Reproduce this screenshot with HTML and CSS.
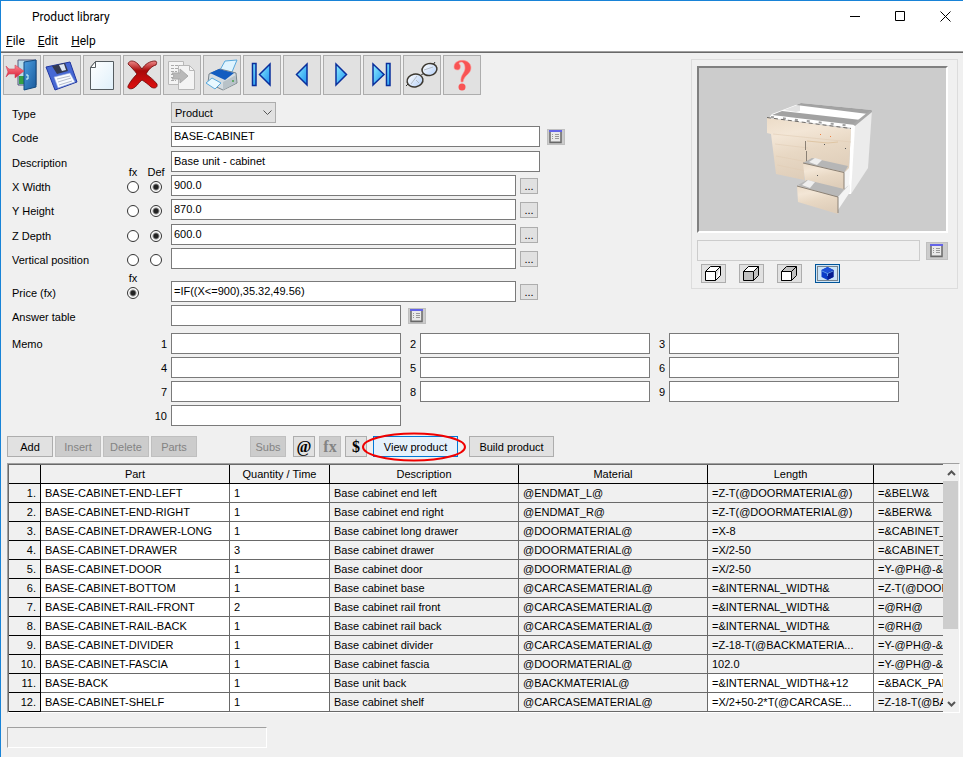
FILE: index.html
```html
<!DOCTYPE html>
<html lang="en">
<head>
  <meta charset="UTF-8">
  <meta name="viewport" content="width=device-width, initial-scale=1.0">
  <title>Product library</title>
  <link rel="stylesheet" href="styles.css">
</head>
<body>
  <!-- Symbols shared by several buttons -->
  <svg class="symbols" width="0" height="0" aria-hidden="true">
    <defs>
      <linearGradient id="blueArrow" x1="0" y1="0" x2="1" y2="1">
        <stop offset="0" stop-color="#8ff0ff"/>
        <stop offset="1" stop-color="#1a90f0"/>
      </linearGradient>
      <linearGradient id="doorBlue" x1="0" y1="0" x2="1" y2="1">
        <stop offset="0" stop-color="#4a9de0"/>
        <stop offset="1" stop-color="#1a5a9c"/>
      </linearGradient>
      <linearGradient id="pinkRed" x1="0" y1="0" x2="0" y2="1">
        <stop offset="0" stop-color="#ff8a94"/>
        <stop offset="1" stop-color="#d81830"/>
      </linearGradient>
      <linearGradient id="deepRed" x1="0" y1="0" x2="0" y2="1">
        <stop offset="0" stop-color="#ee8a8a"/>
        <stop offset="0.35" stop-color="#a80808"/>
        <stop offset="1" stop-color="#e01010"/>
      </linearGradient>
      <linearGradient id="paper" x1="0" y1="0" x2="1" y2="1">
        <stop offset="0" stop-color="#ffffff"/>
        <stop offset="1" stop-color="#dff0fa"/>
      </linearGradient>
      <linearGradient id="wood" x1="0" y1="0" x2="0.3" y2="1">
        <stop offset="0" stop-color="#ecdcc8"/>
        <stop offset="0.3" stop-color="#f3e6d6"/>
        <stop offset="0.6" stop-color="#e8d8c4"/>
        <stop offset="1" stop-color="#dfceba"/>
      </linearGradient>
      <linearGradient id="lens" x1="0" y1="0" x2="1" y2="1">
        <stop offset="0" stop-color="#ffffff"/>
        <stop offset="1" stop-color="#b4d0f8"/>
      </linearGradient>
      <symbol id="list" viewBox="0 0 14 14">
        <path d="M1 0.500h11v12H1z" fill="#e9e9e9" stroke="#686868" stroke-width="1.500"/>
        <path d="M0 0h13v2H0z" fill="#6464e8"/>
        <path d="M2 11h9v1H2z" fill="#aaa"/>
        <path d="M3 4.5h1M6 4.5h4M3 6.5h1M6 6.5h4M3 8.500h1M6 8.500h4" stroke="#999"/>
      </symbol>
    </defs>
  </svg>

  <header>
    <div class="title-bar">
      <h1>Product library</h1>
      <div class="window-controls">
        <button aria-label="Minimize"><svg width="11" height="11"><path d="M0 5.500h10" stroke="#000"/></svg></button>
        <button aria-label="Maximize"><svg width="11" height="11"><path d="M0.5 0.5h9v9h-9z" fill="none" stroke="#000"/></svg></button>
        <button aria-label="Close"><svg width="11" height="11"><path d="M0.500 0.500l10 10M10.500 0.500l-10 10" stroke="#000"/></svg></button>
      </div>
    </div>
    <nav class="menu">
      <a href="#"><u>F</u>ile</a>
      <a href="#"><u>E</u>dit</a>
      <a href="#"><u>H</u>elp</a>
    </nav>
  </header>

  <main>
    <div class="top">
      <div class="left">
        <!-- Toolbar -->
        <div class="toolbar">
          <button aria-label="Exit">
            <svg width="34" height="34">
              <path d="M13 2h18v25H13z" fill="#b8dcec" stroke="#557"/>
              <path d="M14 18h8v8h-8z" fill="#35a045"/>
              <path d="M19 4l12-2v27l-12 3z" fill="url(#doorBlue)" stroke="#124a80"/>
              <path d="M21 17h2v4h-2" fill="none" stroke="#dff"/>
              <path d="M1 8l3 3h6V7l9 6-9 7v-4H4l-3 3 2-5z" fill="url(#pinkRed)" stroke="#d04a5c" stroke-width=".6"/>
            </svg>
          </button>
          <button aria-label="Save">
            <svg width="34" height="34">
              <path d="M1 9L25 4l7 20-22 8z" fill="#4668d4" stroke="#2036a0"/>
              <path d="M7 8l13-3 3 8-11 3z" fill="#343a50"/>
              <path d="M14 7l5-1 2 6-4 1z" fill="#dde6f4"/>
              <path d="M9 19l16-4 5 9-17 6z" fill="#f8fbff" stroke="#8aa0d8" stroke-width=".6"/>
              <path d="M12 21l13-3M13 24l13-4M14 27l13-4" stroke="#b4bccc"/>
            </svg>
          </button>
          <button aria-label="New">
            <svg width="34" height="34">
              <path d="M10.500 3.500h18v28h-23v-22z" fill="url(#paper)" stroke="#555c60"/>
              <path d="M10.500 3.500v6h-5z" fill="#fff" stroke="#555c60"/>
            </svg>
          </button>
          <button aria-label="Delete product">
            <svg width="34" height="34">
              <path d="M3 6c1-4 6-4 10 0l4 5c3-5 8-8 13-8 2 0 2 2 1 4-4 1-7 4-10 9 4 3 8 6 11 10 1 4-3 5-6 3-3-3-6-5-9-7-3 2-4 5-7 7-3 3-8 2-7-1 2-4 5-8 9-12-3-4-5-6-9-10z" fill="url(#deepRed)" stroke="#6c0505" stroke-width=".8"/>
            </svg>
          </button>
          <button disabled aria-label="Copy">
            <svg width="34" height="34">
              <path d="M3.500 3.500h15v23h-15z" fill="#f4f4f4" stroke="#b8b8b8"/>
              <path d="M13.500 7.500h11l5 5v19h-16z" fill="#f4f4f4" stroke="#b8b8b8"/>
              <path d="M24.500 7.500v5h5" fill="none" stroke="#b8b8b8"/>
              <path d="M6 7.500h9M6 10.500h7M6 13.500h6M6 16.500h5M6 19.500h5M6 22.500h5" stroke="#aaa" stroke-dasharray="3 1"/>
              <path d="M7 15h8v-4l8 7-8 7v-4H7l2-3z" fill="#b9b9b9" stroke="#aaa"/>
            </svg>
          </button>
          <button aria-label="Print">
            <svg width="34" height="34">
              <path d="M15 12l5-9 12-1-5 12z" fill="#dff4ff" stroke="#58a8dc"/>
              <path d="M4 16l11-5 16 4 1 10-14 7-15-7z" fill="#d4dce2" stroke="#7a858c"/>
              <path d="M5 15l9-4 15 4-9 7z" fill="#125cc0"/>
              <path d="M18 24l13-7v8l-13 7z" fill="#b8c2c8"/>
              <path d="M1 25l6-5 9 5-6 6z" fill="#e8f8ff" stroke="#58a8dc"/>
              <circle cx="28" cy="23" r="1" fill="#48a048"/>
            </svg>
          </button>
          <button aria-label="First">
            <svg width="34" height="34"><g fill="url(#blueArrow)" stroke="#0a2f9c" stroke-width="1.500"><path d="M7.500 5.500H11v22H7.500z"/><path d="M25 6v21L14.500 16.500z"/></g></svg>
          </button>
          <button aria-label="Previous">
            <svg width="34" height="34"><path d="M22 6v21L11.500 16.500z" fill="url(#blueArrow)" stroke="#0a2f9c" stroke-width="1.500"/></svg>
          </button>
          <button aria-label="Next">
            <svg width="34" height="34"><path d="M11 6v21l10.500-10.500z" fill="url(#blueArrow)" stroke="#0a2f9c" stroke-width="1.500"/></svg>
          </button>
          <button aria-label="Last">
            <svg width="34" height="34"><g fill="url(#blueArrow)" stroke="#0a2f9c" stroke-width="1.500"><path d="M21.500 5.500H25v22h-3.500z"/><path d="M8 6v21l11-10.500z"/></g></svg>
          </button>
          <button aria-label="Find">
            <svg width="34" height="34">
              <path d="M1 28l3-3M28 7l2-3M15 20c0-4 2-3 3-4" fill="none" stroke="#333"/>
              <ellipse cx="10" cy="22.500" rx="8" ry="6.500" transform="rotate(-12 10 22.500)" fill="url(#lens)" stroke="#3c3830" stroke-width="1.500"/>
              <ellipse cx="24.500" cy="11.500" rx="7.500" ry="6" transform="rotate(-12 24.500 11.500)" fill="url(#lens)" stroke="#3c3830" stroke-width="1.500"/>
              <path d="M6 26l6-8M11 22l3 3M19 12l9-3" stroke="#b4bcc4"/>
            </svg>
          </button>
          <button aria-label="Help">
            <svg width="34" height="34">
              <path d="M9 9c0-9 17-9 17 1 0 6-7 7-8 14h-2c-1-7 4-9 4-14 0-7-6-7-6-4 2 0 2 6-1 6-3 0-4-1-4-3z" fill="#f85454" stroke="#ff9c9c" stroke-width=".6"/>
              <circle cx="17" cy="29" r="3.500" fill="#f85454"/>
            </svg>
          </button>
        </div>

        <!-- Product fields -->
        <form class="fields">
          <div class="group">
            <div class="row">
              <label class="name" for="type">Type</label>
              <div class="select-box">
                <select id="type"><option>Product</option></select>
                <svg width="9" height="6"><path d="M0.500 0.500l4 4 4-4" fill="none" stroke="#555"/></svg>
              </div>
            </div>
            <div class="row">
              <label class="name" for="code">Code</label>
              <input class="wide" type="text" id="code" value="BASE-CABINET">
              <button type="button" class="list far" aria-label="Code list"><svg width="14" height="14"><use href="#list"/></svg></button>
            </div>
          </div>
          <div class="group">
            <div class="row">
              <label class="name" for="description">Description</label>
              <input class="wide" type="text" id="description" value="Base unit - cabinet">
            </div>
            <div class="row">
              <label class="name" for="width">X Width</label>
              <div class="radios">
                <label>fx<input type="radio" name="x-mode"></label>
                <label>Def<input type="radio" name="x-mode" checked></label>
              </div>
              <input class="medium" type="text" id="width" value="900.0">
              <button type="button" class="more">...</button>
            </div>
            <div class="row">
              <label class="name" for="height">Y Height</label>
              <div class="radios">
                <label><input type="radio" name="y-mode" aria-label="fx"></label>
                <label><input type="radio" name="y-mode" aria-label="Def" checked></label>
              </div>
              <input class="medium" type="text" id="height" value="870.0">
              <button type="button" class="more">...</button>
            </div>
          </div>
          <div class="group">
            <div class="row">
              <label class="name" for="depth">Z Depth</label>
              <div class="radios">
                <label><input type="radio" name="z-mode" aria-label="fx"></label>
                <label><input type="radio" name="z-mode" aria-label="Def" checked></label>
              </div>
              <input class="medium" type="text" id="depth" value="600.0">
              <button type="button" class="more">...</button>
            </div>
            <div class="row">
              <label class="name" for="vertical">Vertical position</label>
              <div class="radios">
                <label><input type="radio" name="v-mode" aria-label="fx"></label>
                <label><input type="radio" name="v-mode" aria-label="Def"></label>
              </div>
              <input class="medium" type="text" id="vertical">
              <button type="button" class="more">...</button>
            </div>
          </div>
          <div class="group price">
            <div class="row">
              <label class="name" for="price">Price (fx)</label>
              <div class="radios">
                <label>fx<input type="radio" name="p-mode" checked></label>
              </div>
              <input class="medium" type="text" id="price" value="=IF((X&lt;=900),35.32,49.56)">
              <button type="button" class="more">...</button>
            </div>
            <div class="row">
              <label class="name" for="answer">Answer table</label>
              <input class="short" type="text" id="answer">
              <button type="button" class="list far" aria-label="Answer table list"><svg width="14" height="14"><use href="#list"/></svg></button>
            </div>
          </div>
        </form>
      </div>

      <!-- Preview -->
      <aside class="preview">
        <div class="view">
          <svg width="247" height="163" viewBox="699 68 247 163">
            <path d="M772 114l29-11 71 7-19 18-84-10z" fill="#fff"/>
            <path d="M784 110l16-6v7l-4 1z" fill="#e2e2e2"/>
            <path d="M796 105l5-2 71 7-4 4z" fill="#a2a2a2"/>
            <path d="M772 115l10-4 79 9-6 5z" fill="#a2a2a2"/>
            <path d="M771 117l81 9" stroke="#a0a0a0" stroke-width="2" stroke-dasharray="3 9"/>
            <path d="M852 127l20-17-4 58-17 26z" fill="#ececec"/>
            <path d="M851 126h4l-4 68h-3z" fill="#fff"/>
            <path d="M853 124l15-12 4-2v2l-17 14z" fill="#a8a8a8"/>
            <path d="M767 118l84 11-2 39-1 4-43-4-1 12-28-6-5-40-4-1z" fill="url(#wood)"/>
            <path d="M773 134l78 8M775 144l33 4M776 156l32 6M777 165l29 6" stroke="#e1cdb6" stroke-width=".6"/>
            <path d="M767 117.500l84 11" stroke="#6e6a66" stroke-dasharray="4 3"/>
            <path d="M805.500 141v9M806.500 151v12" stroke="#8a8074"/>
            <path d="M807 141l21 2 10-1" fill="none" stroke="#dfc6a4"/>
            <path d="M803 163l9-5 36 8-4 7z" fill="#b6b6b6"/>
            <path d="M809 162l6-4 7 2-5 5z" fill="#eee"/>
            <path d="M844 173l6-6-1 18-5 4z" fill="#f4f4f4"/>
            <path d="M803 163l41 9v18l-39-9z" fill="url(#wood)"/>
            <path d="M803 163l41 9.500v17" fill="none" stroke="#8a8074"/>
            <path d="M798 185l9-5 37 9-6 9z" fill="#b8b8b8"/>
            <path d="M802 185l6-5 7 2-5 6z" fill="#eee"/>
            <path d="M838 197l12-13v8l-12 18z" fill="#f4f4f4"/>
            <path d="M797 186l41 11v17l-40-12z" fill="url(#wood)"/>
            <path d="M797 186l41 11v16" fill="none" stroke="#8a8074"/>
            <path d="M820 134.500h1M830 136.500h1" stroke="#f08040"/>
            <path d="M824 144.500h1M845 148.500h1M817 175.500h1" stroke="#555"/>
          </svg>
        </div>
        <div class="preview-row">
          <input type="text" aria-label="Preview option" disabled>
          <button type="button" class="list" aria-label="Preview list"><svg width="14" height="14"><use href="#list"/></svg></button>
        </div>
        <div class="cubes">
          <button aria-label="Wireframe"><svg width="17" height="15"><path d="M0.500 5.500h10v9h-10zM0.500 5.500l5-5h10l-5 5M15.500 0.500v9l-5 5" fill="#fff" stroke="#000"/></svg></button>
          <button aria-label="Shaded"><svg width="17" height="15"><path d="M0.500 5.500l5-5h10v9l-5 5h-10z" fill="#c0c0c0" stroke="#000"/><path d="M0.500 5.500l5-5h10l-5 5z" fill="#fff" stroke="#000"/><path d="M10.500 5.500v9" stroke="#000"/></svg></button>
          <button aria-label="Hidden line"><svg width="17" height="15"><path d="M0.500 5.500l5-5h10v9l-5 5h-10z" fill="#c0c0c0" stroke="#000"/><path d="M0.500 5.500h10v9h-10z" fill="#fff" stroke="#000"/><path d="M10.500 5.500l5-5" stroke="#000"/></svg></button>
          <button class="active" aria-label="Rendered"><svg width="21" height="15"><path d="M0.500 0.500h20v14h-20z" fill="none" stroke="#222" stroke-dasharray="1 1"/><path d="M10.500 1l6 3v7l-6 3-6-3V4z" fill="#0a3cc8"/><path d="M4.500 4l6 3 6-3-6-3z" fill="#1c50d8"/><path d="M10.500 7l6-3v7l-6 3z" fill="#061c90"/><path d="M5 5l5.500 2.500L16 5M10.500 7v3" fill="none" stroke="#5c98e8"/></svg></button>
        </div>
      </aside>
    </div>

    <!-- Memo fields -->
    <div class="memo">
      <span class="name">Memo</span>
      <div class="memo-grid">
        <label>1<input type="text"></label>
        <label>2<input type="text"></label>
        <label>3<input type="text"></label>
        <label>4<input type="text"></label>
        <label>5<input type="text"></label>
        <label>6<input type="text"></label>
        <label>7<input type="text"></label>
        <label>8<input type="text"></label>
        <label>9<input type="text"></label>
        <label>10<input type="text"></label>
      </div>
    </div>

    <!-- Part actions -->
    <div class="actions">
      <div class="edit-buttons">
        <button>Add</button>
        <button disabled>Insert</button>
        <button disabled>Delete</button>
        <button disabled>Parts</button>
      </div>
      <button class="subs" disabled>Subs</button>
      <div class="symbol-buttons">
        <button>@</button>
        <button disabled>fx</button>
        <button>$</button>
      </div>
      <div class="product-buttons">
        <div class="marked">
          <button class="focused">View product</button>
          <svg class="ring" width="106" height="31"><ellipse cx="53" cy="15" rx="51" ry="13.500" fill="none" stroke="#f00000" stroke-width="2"/></svg>
        </div>
        <button>Build product</button>
      </div>
    </div>

    <!-- Parts table -->
    <div class="grid">
      <div class="grid-view">
        <table>
          <colgroup>
            <col class="c-num"><col class="c-wide"><col class="c-qty"><col class="c-wide"><col class="c-wide"><col class="c-length"><col class="c-wide">
          </colgroup>
          <thead>
            <tr><th></th><th>Part</th><th>Quantity / Time</th><th>Description</th><th>Material</th><th>Length</th><th></th></tr>
          </thead>
          <tbody>
            <tr><th>1.</th><td>BASE-CABINET-END-LEFT</td><td>1</td><td>Base cabinet end left</td><td>@ENDMAT_L@</td><td>=Z-T(@DOORMATERIAL@)</td><td>=&amp;BELW&amp;</td></tr>
            <tr><th>2.</th><td>BASE-CABINET-END-RIGHT</td><td>1</td><td>Base cabinet end right</td><td>@ENDMAT_R@</td><td>=Z-T(@DOORMATERIAL@)</td><td>=&amp;BERW&amp;</td></tr>
            <tr><th>3.</th><td>BASE-CABINET-DRAWER-LONG</td><td>1</td><td>Base cabinet long drawer</td><td>@DOORMATERIAL@</td><td>=X-8</td><td>=&amp;CABINET_</td></tr>
            <tr><th>4.</th><td>BASE-CABINET-DRAWER</td><td>3</td><td>Base cabinet drawer</td><td>@DOORMATERIAL@</td><td>=X/2-50</td><td>=&amp;CABINET_</td></tr>
            <tr><th>5.</th><td>BASE-CABINET-DOOR</td><td>1</td><td>Base cabinet door</td><td>@DOORMATERIAL@</td><td>=X/2-50</td><td>=Y-@PH@-&amp;C</td></tr>
            <tr><th>6.</th><td>BASE-CABINET-BOTTOM</td><td>1</td><td>Base cabinet base</td><td>@CARCASEMATERIAL@</td><td>=&amp;INTERNAL_WIDTH&amp;</td><td>=Z-T(@DOOR</td></tr>
            <tr><th>7.</th><td>BASE-CABINET-RAIL-FRONT</td><td>2</td><td>Base cabinet rail front</td><td>@CARCASEMATERIAL@</td><td>=&amp;INTERNAL_WIDTH&amp;</td><td>=@RH@</td></tr>
            <tr><th>8.</th><td>BASE-CABINET-RAIL-BACK</td><td>1</td><td>Base cabinet rail back</td><td>@CARCASEMATERIAL@</td><td>=&amp;INTERNAL_WIDTH&amp;</td><td>=@RH@</td></tr>
            <tr><th>9.</th><td>BASE-CABINET-DIVIDER</td><td>1</td><td>Base cabinet divider</td><td>@CARCASEMATERIAL@</td><td>=Z-18-T(@BACKMATERIA...</td><td>=Y-@PH@-&amp;C</td></tr>
            <tr><th>10.</th><td>BASE-CABINET-FASCIA</td><td>1</td><td>Base cabinet fascia</td><td>@DOORMATERIAL@</td><td>102.0</td><td>=Y-@PH@-&amp;C</td></tr>
            <tr><th>11.</th><td>BASE-BACK</td><td>1</td><td>Base unit back</td><td>@BACKMATERIAL@</td><td class="open">=&amp;INTERNAL_WIDTH&amp;+12</td><td class="open">=&amp;BACK_PAN</td></tr>
            <tr><th>12.</th><td>BASE-CABINET-SHELF</td><td>1</td><td>Base cabinet shelf</td><td>@CARCASEMATERIAL@</td><td class="open">=X/2+50-2*T(@CARCASE...</td><td>=Z-18-T(@BA</td></tr>
          </tbody>
        </table>
      </div>
      <div class="scrollbar">
        <button aria-label="Scroll up"><svg width="9" height="6"><path d="M1 5l3.500-3.500L8 5" fill="none" stroke="#555" stroke-width="2"/></svg></button>
        <div class="track"><div class="thumb"></div></div>
        <button aria-label="Scroll down"><svg width="9" height="6"><path d="M1 1l3.500 3.500L8 1" fill="none" stroke="#555" stroke-width="2"/></svg></button>
      </div>
    </div>
  </main>

  <footer>
    <div class="status"></div>
  </footer>
</body>
</html>
```

FILE: styles.css
```css
* {
  box-sizing: border-box;
}
body {
  margin: 0;
  min-height: 100vh;
  background: #f0f0f0;
  border-top: 1px solid #1883d7;
  border-left: 1px solid #1883d7;
  color: #000;
  font-family: "Liberation Sans", Arial, sans-serif;
  font-size: 11px;
  line-height: 16px;
}
button, input, select {
  font: inherit;
  color: inherit;
  margin: 0;
  padding: 0;
}
svg {
  display: block;
}
.symbols {
  position: absolute;
}

/* Title and menu */
header {
  background: #fff;
  border-bottom: 1px solid #696969;
  font-family: Roboto, sans-serif;
  font-size: 12px;
}
.title-bar {
  display: flex;
  justify-content: space-between;
  align-items: center;
  height: 30px;
}
h1 {
  margin: 0;
  padding: 2px 0 0 31px;
  font-size: 12px;
  font-weight: normal;
}
.window-controls {
  display: flex;
}
.window-controls button {
  display: flex;
  align-items: center;
  justify-content: center;
  width: 45px;
  height: 30px;
  padding-left: 9px;
  background: none;
  border: none;
}
.menu {
  display: flex;
  gap: 13px;
  height: 21px;
  padding: 2px 5px;
  border-bottom: 1px solid #a0a0a0;
}
.menu a {
  color: #000;
  text-decoration: none;
}

/* Toolbar */
.top {
  display: flex;
  justify-content: space-between;
  align-items: flex-start;
}
.toolbar {
  display: flex;
  gap: 2px;
  padding: 2px;
}
.toolbar button {
  display: flex;
  align-items: center;
  justify-content: center;
  width: 38px;
  height: 40px;
  background: #e1e1e1;
  border: 1px solid #adadad;
}

/* Product fields */
.fields {
  display: flex;
  flex-direction: column;
  gap: 4px;
  padding: 5px 0 0 11px;
}
.group {
  display: flex;
  flex-direction: column;
  gap: 3px;
}
.price {
  padding-top: 8px;
}
.row {
  display: flex;
  align-items: center;
  height: 21px;
}
.name {
  width: 159px;
  padding-top: 3px;
}
.row:has(.radios) .name {
  width: 110px;
}
input[type="text"] {
  height: 21px;
  padding: 0 2px 2px;
  background: #fff;
  border: 1px solid #7a7a7a;
}
.wide {
  width: 369px;
}
.medium {
  width: 345px;
}
.short {
  width: 230px;
}
.select-box {
  display: grid;
  align-items: center;
  width: 105px;
}
.select-box select {
  grid-area: 1 / 1;
  height: 21px;
  padding: 0 3px;
  appearance: none;
  background: #e1e1e1;
  border: 1px solid #adadad;
  border-radius: 0;
}
.select-box svg {
  grid-area: 1 / 1;
  justify-self: end;
  margin-right: 4px;
  pointer-events: none;
}
.radios {
  display: flex;
  align-items: flex-end;
  gap: 1px;
  width: 49px;
  height: 14px;
}
.radios label {
  display: flex;
  flex-direction: column;
  align-items: center;
  gap: 2px;
  width: 22px;
  line-height: 13px;
}
input[type="radio"] {
  appearance: none;
  width: 12px;
  height: 12px;
  background: #fff;
  border: 1px solid #333;
  border-radius: 50%;
}
input[type="radio"]:checked {
  background: radial-gradient(circle, #222 2px, #fff 4px);
}
.more {
  width: 18px;
  height: 16px;
  margin-left: 4px;
  background: #e1e1e1;
  border: 1px solid #adadad;
  line-height: 14px;
}
.list {
  display: flex;
  align-items: center;
  justify-content: center;
  width: 18px;
  height: 16px;
  background: #ccc;
  border: 1px solid #bfbfbf;
}
.far {
  margin-left: 7px;
}

/* Preview */
.preview {
  width: 267px;
  margin: 6px 5px 0 0;
  padding: 6px 9px 5px 5px;
  border: 1px solid #dcdcdc;
}
.view {
  height: 167px;
  background: #ccc;
  border: 2px solid;
  border-color: #808080 #fff #fff #808080;
}
.preview-row {
  display: flex;
  align-items: center;
  gap: 6px;
  padding: 7px 0 3px;
}
.preview-row input[type="text"] {
  flex: 1;
  min-width: 0;
  background: #f0f0f0;
  border: 1px solid #ccc;
}
.preview-row .list {
  width: 22px;
  height: 18px;
}
.cubes {
  display: flex;
  gap: 13px;
  padding-left: 4px;
}
.cubes button {
  display: flex;
  align-items: center;
  justify-content: center;
  width: 25px;
  height: 19px;
  background: #e1e1e1;
  border: 1px solid #adadad;
}
.cubes .active {
  background: #cce4f7;
  border-color: #005499;
}

/* Memo fields */
.memo {
  display: flex;
  padding: 7px 0 0 11px;
}
.memo .name {
  width: 140px;
}
.memo-grid {
  display: grid;
  grid-template-columns: repeat(3, 249px);
  row-gap: 3px;
}
.memo-grid label {
  display: flex;
  align-items: center;
  justify-content: flex-end;
  gap: 4px;
}
.memo-grid input {
  width: 230px;
}

/* Part actions */
.actions {
  display: flex;
  padding: 10px 6px 6px;
}
.actions button {
  height: 21px;
  background: #e1e1e1;
  border: 1px solid #adadad;
}
.actions button:disabled {
  background: #ccc;
  border-color: #bfbfbf;
  color: #838383;
}
.edit-buttons {
  display: flex;
  gap: 2px;
}
.edit-buttons button {
  width: 46px;
}
.actions .subs {
  width: 36px;
  margin: 0 7px 0 53px;
}
.symbol-buttons {
  display: flex;
  gap: 4px;
}
.symbol-buttons button {
  width: 22px;
  font-family: "Liberation Serif", serif;
  font-size: 16px;
  font-weight: bold;
}
.product-buttons {
  display: flex;
  gap: 11px;
  padding-left: 6px;
}
.product-buttons button {
  width: 85px;
}
.marked {
  position: relative;
}
.actions .focused {
  background: #e5f1fb;
  border-color: #0078d7;
}
.ring {
  position: absolute;
  top: -4px;
  left: -12px;
  pointer-events: none;
}

/* Parts table */
.grid {
  display: flex;
  margin: 0 3px 0 6px;
  border: 1px solid;
  border-color: #a0a0a0 #fff #fff #a0a0a0;
}
.grid-view {
  flex: 1;
  min-width: 0;
  overflow: hidden;
  border-top: 1px solid #696969;
  border-left: 1px solid #696969;
}
table {
  width: 1054px;
  table-layout: fixed;
  border-collapse: separate;
  border-spacing: 0;
}
.c-num {
  width: 32px;
}
.c-wide {
  width: 189px;
}
.c-qty {
  width: 100px;
}
.c-length {
  width: 166px;
}
th, td {
  height: 19px;
  padding: 0 4px;
  border-right: 1px solid #696969;
  border-bottom: 1px solid #696969;
  font-weight: normal;
  text-align: left;
  white-space: nowrap;
}
thead th {
  border-color: #000;
  text-align: center;
}
tbody th {
  border-color: #000;
  text-align: right;
}
td:nth-child(2), td:nth-child(3), .open {
  background: #fff;
}
.scrollbar {
  display: flex;
  flex-direction: column;
  width: 16px;
}
.scrollbar button {
  display: flex;
  align-items: center;
  justify-content: center;
  height: 17px;
  background: none;
  border: none;
}
.track {
  flex: 1;
}
.thumb {
  height: 69%;
  margin-right: 1px;
  background: #cdcdcd;
}

/* Status */
footer {
  padding: 14px 6px 9px;
}
.status {
  width: 260px;
  height: 21px;
  border: 1px solid;
  border-color: #a0a0a0 #fff #fff #a0a0a0;
}
```
